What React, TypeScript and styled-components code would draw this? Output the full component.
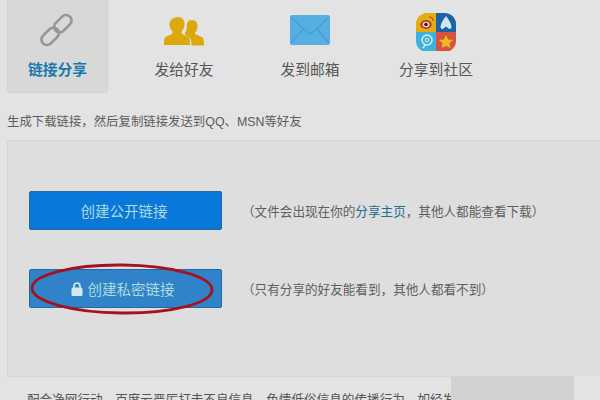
import React from 'react';
import styled, { createGlobalStyle } from 'styled-components';

const GlobalStyle = createGlobalStyle`
  html, body {
    margin: 0;
    padding: 0;
    background: #e3e3e3;
  }
  body {
    width: 600px;
    height: 400px;
    overflow: hidden;
    font-family: "Liberation Sans", "Noto Sans CJK SC", sans-serif;
  }
`;

const Page = styled.div`
  position: relative;
  width: 600px;
  height: 400px;
  overflow: hidden;
  padding-left: 7px;
  box-sizing: border-box;
`;

const Tabs = styled.div`
  display: flex;
  height: 93px;
`;

const Tab = styled.div<{ $active?: boolean }>`
  width: ${p => (p.$active ? 101 : 126)}px;
  margin-right: ${p => (p.$active ? 13 : 0)}px;
  height: 93px;
  box-sizing: border-box;
  display: flex;
  flex-direction: column;
  align-items: center;
  padding-top: 11px;
  border-radius: 0 0 4px 4px;
  background: ${p => (p.$active ? '#d8d8d8' : 'transparent')};
  border: 1px solid ${p => (p.$active ? '#d2d2d2' : 'transparent')};
  border-top: 0;
`;

const TabIcon = styled.svg`
  width: 40px;
  height: 40px;
  display: block;
  flex: none;
`;

const TabLabel = styled.div<{ $active?: boolean }>`
  margin-top: 9px;
  font-size: 14.8px;
  line-height: 20px;
  white-space: nowrap;
  color: ${p => (p.$active ? '#1a78b0' : '#555')};
  font-weight: ${p => (p.$active ? 700 : 400)};
`;

const Hint = styled.div`
  margin-top: 20px;
  height: 18px;
  line-height: 18px;
  font-size: 12.4px;
  color: #5c5c5c;
  white-space: nowrap;
`;

const Panel = styled.div`
  margin-top: 9px;
  height: 237px;
  box-sizing: border-box;
  background: #dedede;
  border: 1px solid #d6d6d6;
  border-right: 0;
  padding: 50px 21px 0;
  display: flex;
  flex-direction: column;
  gap: 39px;
`;

const Row = styled.div`
  display: flex;
  align-items: center;
  gap: 20px;
`;

const ActionButton = styled.div<{ $bg: string; $locked?: boolean }>`
  position: relative;
  width: 193px;
  height: 39px;
  box-sizing: border-box;
  flex: none;
  display: flex;
  align-items: center;
  justify-content: center;
  gap: 5px;
  padding-right: ${p => (p.$locked ? 6 : 3)}px;
  background: ${p => p.$bg};
  border: 1px solid #1f6aa5;
  border-radius: 2px;
  color: #a9dce0;
  font-size: 14.5px;
`;

const Note = styled.div`
  font-size: 12.6px;
  color: #5f5f5f;
  white-space: nowrap;
`;

const NoteLink = styled.span`
  color: #1f6d8c;
`;

const Ellipse = styled.svg`
  position: absolute;
  left: 0;
  top: -6px;
  width: 193px;
  height: 52px;
  overflow: visible;
`;

const Footer = styled.div`
  margin-top: 14px;
  padding-left: 20px;
  font-size: 12.6px;
  line-height: 18px;
  color: #555;
  white-space: nowrap;
`;

const WatermarkBand = styled.div`
  position: absolute;
  left: 451px;
  top: 376px;
  width: 123px;
  height: 24px;
  background: #d2d2d2;
`;

const WatermarkEnd = styled.div`
  position: absolute;
  left: 574px;
  top: 376px;
  width: 26px;
  height: 24px;
  background: #e3e3e3;
`;

const App: React.FC = () => (
  <Page>
    <GlobalStyle />
    <Tabs>
      <Tab $active>
        <TabIcon viewBox="0 0 40 40">
          <g transform="rotate(-45 18.500 19)" fill="none" stroke="#969696" strokeWidth="2.600">
            <rect x="-0.500" y="13.500" width="20" height="11" rx="5.500" />
            <rect x="17.500" y="13.500" width="20" height="11" rx="5.500" />
          </g>
        </TabIcon>
        <TabLabel $active>链接分享</TabLabel>
      </Tab>
      <Tab>
        <TabIcon viewBox="0 0 40 40">
          <path fill="#dcaa08" d="M14 6c4 0 7 3 6.500 8-.4 3-1.500 5-3 6.500v2c2 1.500 6 2.500 7.500 4 1 1.500 1 4 1 7.500H0c0-3.500 0-6 1-7.500 1.500-1.500 5.500-2.500 7.500-4v-2C7 19 5.900 17 5.500 14 5 9 10 6 14 6z" />
          <path fill="#dcaa08" d="M28 9c4 0 6 3 5.500 7-.3 2.500-1.200 4.500-2.500 5.500v1.500c2 1.200 5.500 2.200 7.500 3.500 1.200 1.500 1.500 4 1.500 8H27.500c0-4-.5-6.500-2-8-1.500-1-3.500-2-4.500-3v-2c2.500-2 1.500-6 2-9 .5-2.500 2.500-3.500 5-3.500z" />
        </TabIcon>
        <TabLabel>发给好友</TabLabel>
      </Tab>
      <Tab>
        <TabIcon viewBox="0 0 40 40">
          <rect x="0" y="4" width="40" height="30" rx="2" fill="#57aee3" />
          <path d="M1 6l16 15c2 2 4 2 6 0L39 6M1 32l12-14M39 32L27 18" fill="none" stroke="#3d90ca" strokeWidth="1" />
        </TabIcon>
        <TabLabel>发到邮箱</TabLabel>
      </Tab>
      <Tab>
        <TabIcon viewBox="0 0 40 40">
          <path d="M20 2h-9C5 2 0 7 0 13v8h20z" fill="#e0ad12" />
          <path d="M20 2h9c6 0 11 5 11 11v8H20z" fill="#1c62a4" />
          <path d="M0 21v9c0 6 5 11 11 11h9V21z" fill="#3eb2dc" />
          <path d="M40 21v9c0 6-5 11-11 11h-9V21z" fill="#d9523f" />
          <ellipse cx="10" cy="13.500" rx="5.800" ry="4.400" fill="#c9372c" />
          <ellipse cx="10" cy="13.500" rx="3.400" ry="2.800" fill="#f3e3c8" />
          <circle cx="10" cy="13.500" r="1.800" fill="#222" />
          <path d="M13 6c2.500 0 4 1.500 4 4" fill="none" stroke="#c9372c" strokeWidth="1.100" />
          <path d="M30 5c2.500 3 5 7 5.500 10.500.2 2-1.500 3-3 2L30 15.500 27.500 17.500c-1.500 1-3.200 0-3-2C25 12 27.500 8 30 5z" fill="#cfe6f4" />
          <circle cx="11" cy="29" r="5" fill="none" stroke="#d5eef7" strokeWidth="1.400" />
          <circle cx="11" cy="29" r="1.800" fill="none" stroke="#d5eef7" strokeWidth="1" />
          <path d="M7 37l2.500-3.500" stroke="#d5eef7" strokeWidth="1.400" />
          <path d="M30 24l2.100 4.400 4.900.6-3.600 3.300 1 4.800-4.400-2.400-4.400 2.400 1-4.800-3.600-3.300 4.900-.6z" fill="#f0b820" />
        </TabIcon>
        <TabLabel>分享到社区</TabLabel>
      </Tab>
    </Tabs>
    <Hint>{'生成下载链接\uFF0C然后复制链接发送到QQ、MSN等好友'}</Hint>
    <Panel>
      <Row>
        <ActionButton $bg="#0a78d8">创建公开链接</ActionButton>
        <Note>{'\uFF08文件会出现在你的'}<NoteLink>分享主页</NoteLink>{'\uFF0C其他人都能查看下载\uFF09'}</Note>
      </Row>
      <Row>
        <ActionButton $bg="#3282c8" $locked>
          <svg width="12" height="14" viewBox="0 0 12 14">
            <path d="M3 6V4a3 3 0 0 1 6 0v2" fill="none" stroke="#d5e8ee" strokeWidth="1.700" />
            <rect x="0.500" y="5.500" width="11" height="8.500" rx="1.500" fill="#d5e8ee" />
          </svg>
          创建私密链接
          <Ellipse viewBox="0 0 193 52">
            <ellipse cx="92" cy="25" rx="90" ry="24" fill="none" stroke="#a5121e" strokeWidth="2.800" transform="rotate(0.600 92 25)" />
          </Ellipse>
        </ActionButton>
        <Note>{'\uFF08只有分享的好友能看到\uFF0C其他人都看不到\uFF09'}</Note>
      </Row>
    </Panel>
    <Footer>{'配合净网行动\uFF0C百度云严厉打击不良信息\uFF0C色情低俗信息的传播行为\uFF0C如经发现\uFF0C将封禁账号'}</Footer>
    <WatermarkBand />
    <WatermarkEnd />
  </Page>
);

export default App;
